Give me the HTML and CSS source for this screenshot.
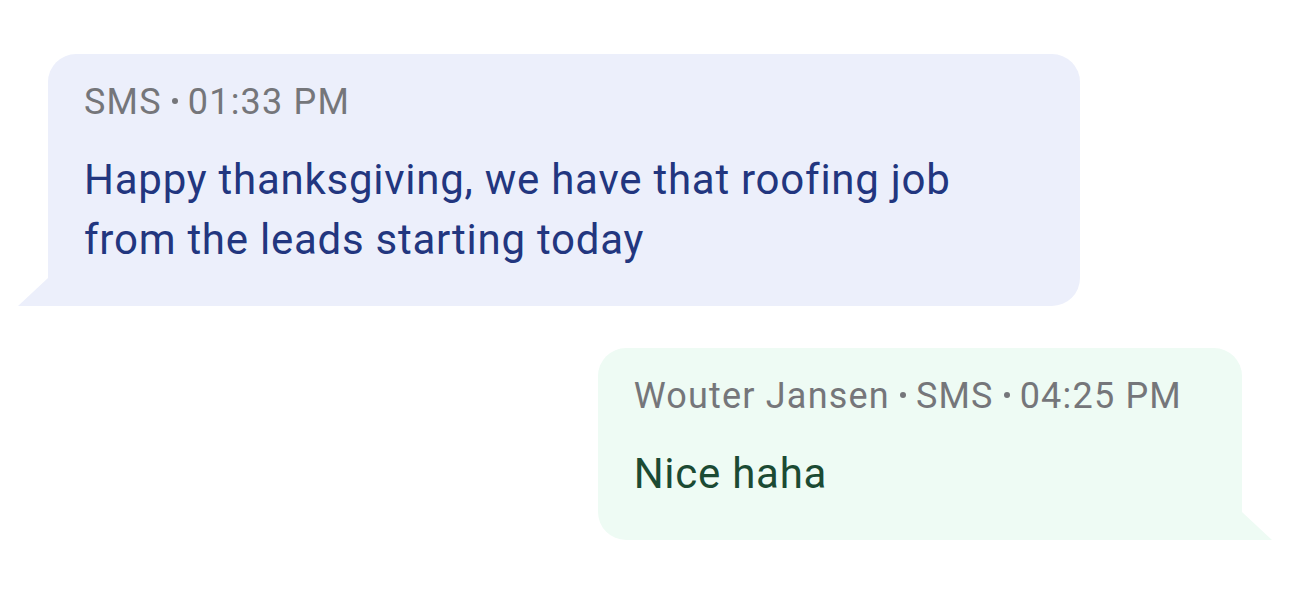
FILE: index.html
```html
<!DOCTYPE html>
<html lang="en">
<head>
<meta charset="utf-8">
<title>Messages</title>
<link rel="stylesheet" href="styles.css">
</head>
<body>
<div class="thread">
  <div class="bubble bubble-in">
    <div class="meta"><span>SMS</span><span class="dot"></span><span>01:33 PM</span></div>
    <div class="text">Happy thanksgiving, we have that roofing job from the leads starting today</div>
  </div>
  <div class="bubble bubble-out">
    <div class="meta"><span>Wouter Jansen</span><span class="dot"></span><span>SMS</span><span class="dot"></span><span>04:25 PM</span></div>
    <div class="text">Nice haha</div>
  </div>
</div>
</body>
</html>
```
FILE: styles.css
```css
html, body {
  margin: 0;
  padding: 0;
  background: #ffffff;
}
body {
  font-family: Roboto, "Noto Sans", "Liberation Sans", sans-serif;
}
.thread {
  display: flex;
  flex-direction: column;
  gap: 42px;
  padding: 54px 48px;
}
.bubble {
  position: relative;
  box-sizing: border-box;
  max-width: 1032px;
  padding: 24px 36px 36px;
}
.bubble::after {
  content: "";
  position: absolute;
  bottom: 0;
  width: 30px;
  height: 28px;
}
.bubble-in {
  align-self: flex-start;
  background: #eceffb;
  border-radius: 28px 28px 28px 0;
}
.bubble-in::after {
  left: -30px;
  background: #eceffb;
  clip-path: polygon(100% 0, 100% 100%, 0 100%);
}
.bubble-out {
  align-self: flex-end;
  background: #eefbf4;
  border-radius: 28px 28px 0 28px;
  padding-right: 60px;
}
.bubble-out::after {
  right: -30px;
  background: #eefbf4;
  clip-path: polygon(0 0, 100% 100%, 0 100%);
}
.meta {
  display: flex;
  align-items: center;
  font-size: 36px;
  line-height: 48px;
  color: #75767a;
  letter-spacing: 1.2px;
  white-space: nowrap;
}
.dot {
  width: 6px;
  height: 6px;
  border-radius: 50%;
  background: #75767a;
  margin: -2px 10px 0 10px;
}
.text {
  margin-top: 24px;
  font-size: 42px;
  line-height: 60px;
  letter-spacing: 0.75px;
}
.bubble-in .text {
  color: #22367f;
}
.bubble-out .text {
  color: #1b4a33;
}
```
